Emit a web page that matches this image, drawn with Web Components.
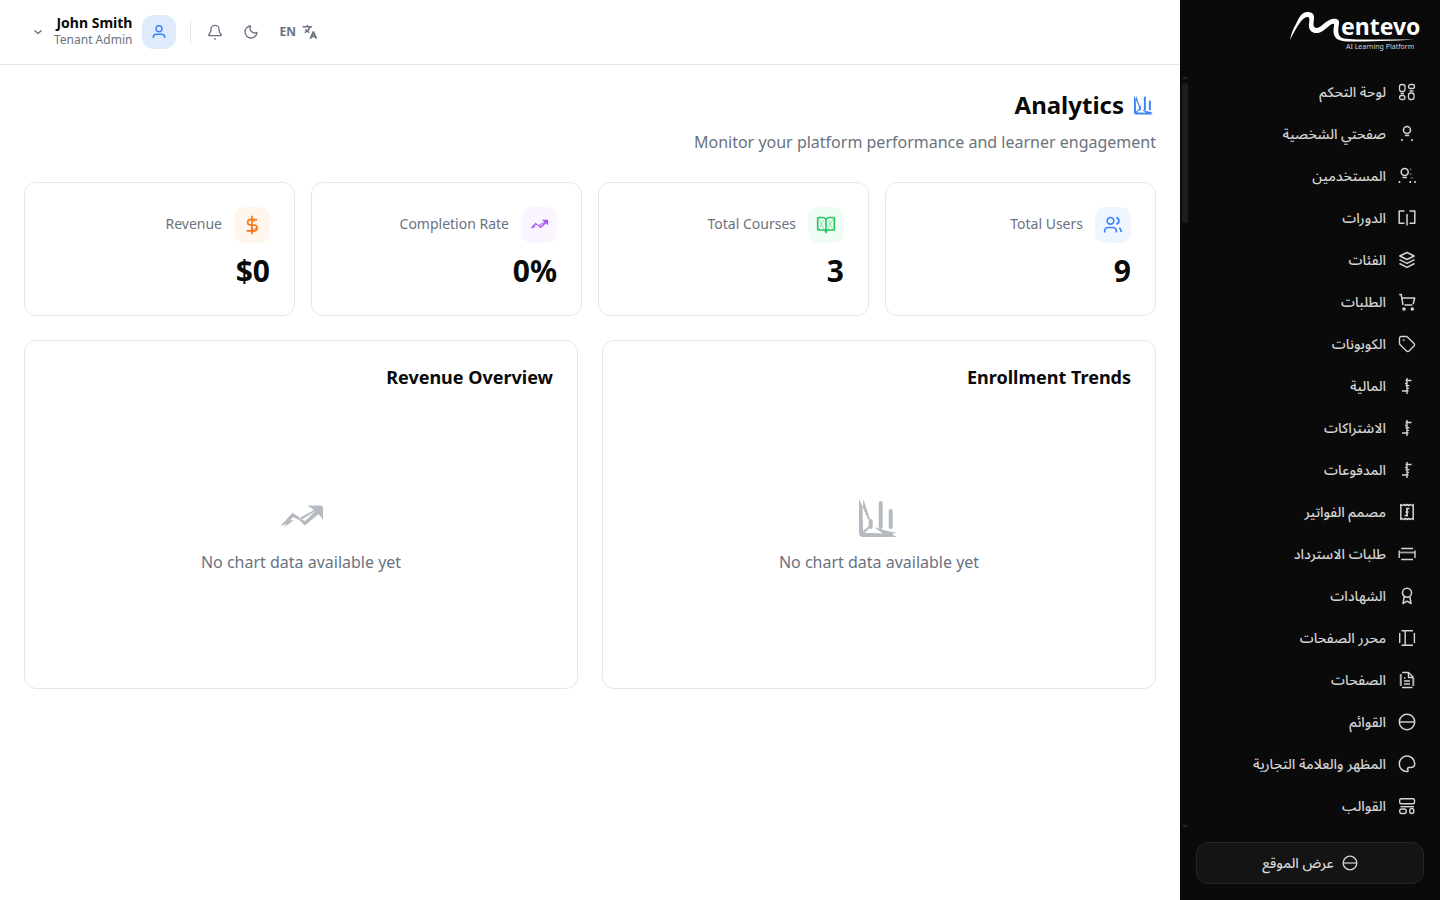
<!DOCTYPE html>
<html lang="ar" dir="rtl">
<head>
<meta charset="utf-8">
<meta name="viewport" content="width=device-width, initial-scale=1">
<title>Mentevo - Analytics</title>
<style>
  body {
    margin: 0;
    background: #fff;
    color: #0a0a0a;
    font-family: "Noto Sans", "Noto Sans Arabic", sans-serif;
    font-size: 16px;
  }
</style>
</head>
<body>
<app-shell>
  <app-sidebar slot="sidebar"></app-sidebar>
  <app-topbar slot="topbar"></app-topbar>
  <page-heading icon="chart">
    Analytics
    <span slot="subtitle">Monitor your platform performance and learner engagement</span>
  </page-heading>
  <card-grid cols="4">
    <stat-card icon="users" tone="blue" label="Total Users">9</stat-card>
    <stat-card icon="book" tone="green" label="Total Courses">3</stat-card>
    <stat-card icon="trend" tone="purple" label="Completion Rate">0%</stat-card>
    <stat-card icon="dollar" tone="orange" label="Revenue">$0</stat-card>
  </card-grid>
  <card-grid cols="2">
    <chart-card icon="chart" heading="Enrollment Trends">No chart data available yet</chart-card>
    <chart-card icon="trend" heading="Revenue Overview">No chart data available yet</chart-card>
  </card-grid>
</app-shell>

<script>
  // name: [viewBox size, stroke width, markup]
  const ICONS = {
    dashboard: [18, 1.3, `
      <rect x="1.5" y="1.5" width="5.5" height="7" rx="2.2"/>
      <rect x="10.5" y="1.5" width="6" height="4" rx="2"/>
      <path d="M11.500 8h4M2.500 10.500h3.500"/>
      <rect x="1.5" y="12.5" width="5.5" height="4" rx="2"/>
      <rect x="10.5" y="10" width="5.5" height="6.5" rx="2.2"/>`],
    profile: [18, 1.6, `
      <circle cx="9" cy="5" r="3.5"/>
      <path d="M6.800 10.500h4.400M4 14v2M14 14v2"/>`],
    people: [18, 1.6, `
      <circle cx="6.700" cy="5" r="3.500"/>
      <path d="M4.500 10.500H9M1.500 14v2M12.300 14v2M17 14v2"/>
      <path d="M12.500 1.500V3M12.500 6.500V8M14 10v1.500" opacity=".5"/>`],
    courses: [18, 1.5, `
      <path d="M6.500 2H1.200v12.200h5.300M11.500 2h5.300v12.200h-5.300"/>
      <path d="M9 5v11.500" stroke-width="2" opacity=".75"/>`],
    layers: [18, 1.5, `
      <path d="M9 1.500 1.800 5 9 8.500 16.200 5z"/>
      <path d="M1.500 8.700 9 12.400l7.500-3.700M1.500 12.500 9 16.300l7.500-3.800"/>`],
    cart: [18, 1.5, `
      <path d="M1.200 1.500h2L5 12M3.700 5h13l-1.500 6M6.500 12h8"/>
      <circle cx="6" cy="16" r="1" fill="currentColor"/>
      <circle cx="14.300" cy="16" r="1" fill="currentColor"/>`],
    tag: [24, 1.8, `
      <path d="M12.600 2.600A2 2 0 0 0 11.200 2H4a2 2 0 0 0-2 2v7.200a2 2 0 0 0 .6 1.400l8.700 8.700a2.400 2.400 0 0 0 3.400 0l6.600-6.600a2.400 2.400 0 0 0 0-3.400z"/>
      <circle cx="7.500" cy="7" r=".4"/>`],
    coin: [18, 1.3, `
      <path d="M9 1v16" stroke-width="2" opacity=".7"/>
      <path d="M7.500 3.500h6M4 14h6.500M7.500 8.700h4M7 6.500h2M9 11.300h2"/>`],
    receipt: [18, 1.5, `
      <path d="M2.800 1.500v15l1.500-1 1.500 1 1.600-1 1.600 1 1.600-1 1.600 1 1.500-1 1.500 1v-15l-1.500 1-1.500-1-1.600 1-1.600-1-1.600 1-1.600-1-1.500 1z"/>
      <path d="M9 5v8.500M8 5.500h3.500M6.500 12.500H10M7.500 9h3" stroke-width="1.700"/>`],
    card: [18, 1.4, `
      <path d="M3.200 3.500h11.800M3.200 14.500h11.800M1.200 5.500v7.500M17 5.500v7.500"/>
      <path d="M1.500 7.500h15.500" stroke-width="1.800" opacity=".75"/>`],
    award: [18, 1.5, `
      <circle cx="9" cy="5.700" r="4.500"/>
      <path d="M6.200 9.500 5 16.500l4-2.300 4 2.300-1.200-7"/>`],
    editor: [18, 1.4, `
      <path d="M3.500 1.800h11.500M3.500 16.200h11.500M1.700 4v10M16.400 4v10M7.200 2v14"/>`],
    file: [18, 1.4, `
      <path d="M4.200 1.500h6.300l5 5M4 16.500h10.500M10.500 1.500v5h5"/>
      <path d="M2.800 3v12M15.300 7v8" stroke-width="2" opacity=".8"/>
      <path d="M6 7h1.500M6 10h6M6 13h6"/>`],
    globe: [18, 1.5, `
      <circle cx="9" cy="9" r="7.700"/>
      <path d="M1.500 9h15" stroke-width="2" opacity=".7"/>`],
    palette: [18, 1.5, `
      <path d="M9.500 16.500C4.500 16.700 1.300 13.200 1.300 9a7.600 7.600 0 0 1 15.400-.5c0 2.500-1.700 4-4 4h-1.500c-1.500 0-2 1.200-1.400 2.200.4.700.5 1.500-.3 1.800z"/>`],
    template: [18, 1.4, `
      <rect x="1.700" y="1.700" width="14.800" height="5" rx="1.500"/>
      <path d="M2.500 9.700h13.500"/>
      <rect x="1.700" y="12" width="6.500" height="4.500" rx="2"/>
      <rect x="11.800" y="11.500" width="4" height="5" rx="2"/>`],
    users: [24, 2, `
      <path d="M16 21v-2a4 4 0 0 0-4-4H6a4 4 0 0 0-4 4v2M19.500 15.500c1.500.7 2.300 2.300 2.500 5M16 3.100a4 4 0 0 1 0 7.800"/>
      <circle cx="9" cy="7" r="4"/>`],
    book: [24, 2, `
      <path d="M12 7v15M3 18a1 1 0 0 1-1-1V4a1 1 0 0 1 1-1h5a4 4 0 0 1 4 4 4 4 0 0 1 4-4h5a1 1 0 0 1 1 1v13a1 1 0 0 1-1 1h-6a3 3 0 0 0-3 3 3 3 0 0 0-3-3z"/>
      <path d="m4 5 6 13M20 5l-6 13M4 17l5-11M20 17 15 6" stroke-width=".8" opacity=".7"/>`],
    dollar: [24, 2, `
      <path d="M12 1v22M18 5.500H9.500a3.300 3.300 0 0 0 0 6.500h5a3.500 3.500 0 0 1 0 7H5.500"/>
      <path d="m8 5 8 3M8 19l9-3" stroke-width="1"/>`],
    user: [24, 2.2, `
      <circle cx="12" cy="7" r="4.500"/>
      <path d="M3.500 21v-1.500a4.500 4.500 0 0 1 4.500-4h8a4.500 4.500 0 0 1 4.500 4V21"/>`],
    bell: [24, 2, `
      <path d="M10.500 22.300h3M3.300 15.300A1 1 0 0 0 4 17.500h16a1 1 0 0 0 .7-2.200C19.400 14 18 12.500 18 8A6 6 0 0 0 6 8c0 4.500-1.400 6-2.700 7.300z"/>`],
    moon: [24, 2, `
      <path d="M21 12.500A9 9 0 1 1 11.500 3 7 7 0 0 0 21 12.500z"/>`],
    chevron: [24, 3, `<path d="m5 9 7 6 7-6"/>`],
    language: [24, 2.2, `
      <path d="M1 4h14M8 1.500V4M5 8l6 5M12 4.500C11 8 8 11 4 13"/>
      <path d="m12.500 22 4.500-10 4.500 10M14.500 18.500h5" stroke-width="2.800"/>`],
    chart: [48, 0, `
      <g fill="currentColor">
        <path d="m4 5 3.500 7L8 37l7-5.500 1 1L9.500 39H14l14 .5-9-6.500L32 37l9.500 1.700L37 40l4.500 3H8c-2.500 0-4-1.500-4-4z"/>
        <path d="m8.300 5 6.700 20-1.500 1L8 14z"/>
        <rect x="13.700" y="25" width="4" height="10" rx="2"/>
        <rect x="23.700" y="7" width="4" height="28" rx="2"/>
        <rect x="33.700" y="15" width="4" height="20" rx="2"/>
      </g>`],
    trend: [48, 0, `
      <g fill="currentColor">
        <path d="m3.500 32 12-13.300 7.500 5-2 1.800-5-2.500-3 3.500 4-.5L6 34.500l4-4.500z"/>
        <path d="m23 23.700 14-7.700-6.500-4.500H44l2 1v13L41.500 20 28 31.500l-7-6.500 2-.5 5 2.500 11-10.500-14 9z"/>
      </g>`]
  };

  class AppIcon extends HTMLElement {
    connectedCallback() {
      const [box, stroke, body] = ICONS[this.getAttribute('name')];
      this.attachShadow({ mode: 'open' });
      this.shadowRoot.innerHTML = `
        <style>
          :host { display: block; flex: none; width: 18px; height: 18px; }
          svg { display: block; width: 100%; height: 100%; }
        </style>
        <svg viewBox="0 0 ${box} ${box}" fill="none" stroke="currentColor" stroke-width="${stroke}"
          stroke-linejoin="round" aria-hidden="true">${body}</svg>
      `;
    }
  }

  class BrandLogo extends HTMLElement {
    connectedCallback() {
      this.attachShadow({ mode: 'open' });
      this.shadowRoot.innerHTML = `
        <style>
          :host { display: block; }
          a { display: block; width: 132px; color: #fff; }
          svg { display: block; width: 132px; height: 44px; direction: ltr; }
          text { fill: #fff; font-family: "Noto Sans", sans-serif; }
          .tagline { fill: #d4d4d4; font-weight: 400; }
        </style>
        <a href="#" aria-label="Mentevo">
          <svg viewBox="0 0 132 44">
            <path fill="#fff" d="M2 32C3 26 5 21 8 16 11 9 14 4 19 4c5 0 7.500 2 7 6.500-.5 5-1.500 9 2.500 9.500 3 0 6-3.500 9.500-6 3-2 5-3.300 8-3.300 5 0 5.500 2.300 4.800 6.300-.8 5-1.800 12 5.200 13.500 8 1.500 40 1 70 1-20 1.500-45 2-66 2-12 0-15-5-14.500-12 0-2 1-4 .5-5.500-1-.5-2 0-3 .5-4.500 3-8 7.500-13 8.500-5 .5-8.500-2-9-6-.5-3.500 1.500-8-.5-9.800-2.500-1.200-5.500 1.300-8 4.800C8.500 19 5 26 2 32z"/>
            <text x="53" y="27" font-size="23" font-weight="700">entevo</text>
            <text class="tagline" x="58" y="41" font-size="7">AI Learning Platform</text>
          </svg>
        </a>
      `;
    }
  }

  const NAV = [
    ['dashboard', 'لوحة التحكم'],
    ['profile', 'صفحتي الشخصية'],
    ['people', 'المستخدمين'],
    ['courses', 'الدورات'],
    ['layers', 'الفئات'],
    ['cart', 'الطلبات'],
    ['tag', 'الكوبونات'],
    ['coin', 'المالية'],
    ['coin', 'الاشتراكات'],
    ['coin', 'المدفوعات'],
    ['receipt', 'مصمم الفواتير'],
    ['card', 'طلبات الاسترداد'],
    ['award', 'الشهادات'],
    ['editor', 'محرر الصفحات'],
    ['file', 'الصفحات'],
    ['globe', 'القوائم'],
    ['palette', 'المظهر والعلامة التجارية'],
    ['template', 'القوالب']
  ];

  class AppSidebar extends HTMLElement {
    connectedCallback() {
      this.attachShadow({ mode: 'open' });
      this.shadowRoot.innerHTML = `
        <style>
          :host {
            display: flex;
            flex-direction: column;
            box-sizing: border-box;
            height: 100vh;
            background: #0a0a0a;
            color: #d4d4d4;
            font-size: 14px;
            font-weight: 500;
          }
          brand-logo { padding: 8px 20px 19px; }
          .scroll { display: flex; flex: 1; min-height: 0; }
          nav {
            flex: 1;
            overflow: hidden;
            padding: 0 12px;
          }
          nav a {
            display: flex;
            align-items: center;
            gap: 12px;
            height: 42px;
            padding: 0 12px;
            box-sizing: border-box;
            color: inherit;
            text-decoration: none;
          }
          .bar {
            display: flex;
            flex-direction: column;
            align-items: center;
            width: 10px;
            padding: 5px 0 2px;
            box-sizing: border-box;
          }
          .arrow {
            border: 3px solid transparent;
            border-top-width: 0;
            border-bottom-color: #262628;
          }
          .arrow.down { transform: rotate(180deg); }
          .thumb {
            width: 6px;
            height: 140px;
            margin: 4px 0 auto;
            border-radius: 3px;
            background: #1d1d20;
          }
          footer { padding: 12px 16px 16px; }
          button {
            display: flex;
            align-items: center;
            justify-content: center;
            gap: 8px;
            width: 100%;
            height: 42px;
            border: 1px solid #262626;
            border-radius: 12px;
            background: #141414;
            color: inherit;
            font: inherit;
          }
          button app-icon { width: 16px; height: 16px; }
        </style>
        <brand-logo></brand-logo>
        <div class="scroll">
          <nav>
            ${NAV.map(([icon, text]) => `<a href="#"><app-icon name="${icon}"></app-icon><span>${text}</span></a>`).join('')}
          </nav>
          <div class="bar">
            <span class="arrow"></span>
            <span class="thumb"></span>
            <span class="arrow down"></span>
          </div>
        </div>
        <footer>
          <button type="button"><app-icon name="globe"></app-icon>عرض الموقع</button>
        </footer>
      `;
    }
  }

  class AppTopbar extends HTMLElement {
    connectedCallback() {
      this.attachShadow({ mode: 'open' });
      this.shadowRoot.innerHTML = `
        <style>
          :host {
            display: flex;
            align-items: center;
            justify-content: flex-end;
            height: 64px;
            padding: 0 24px;
            border-bottom: 1px solid #e5e7eb;
            color: #6b7280;
          }
          button {
            display: flex;
            align-items: center;
            justify-content: center;
            height: 36px;
            padding: 0 10px;
            border: 0;
            background: none;
            color: inherit;
            font: inherit;
          }
          button app-icon { width: 16px; height: 16px; }
          .lang { gap: 6px; font-size: 12px; font-weight: 700; }
          .lang span { padding-bottom: 2px; }
          .divider {
            width: 1px;
            height: 24px;
            margin-inline: 6px 14px;
            background: #e5e7eb;
          }
          .account {
            gap: 10px;
            padding: 0;
            padding-inline-end: 8px;
            text-align: start;
          }
          .account .chevron { width: 12px; height: 12px; }
          .avatar {
            display: grid;
            place-items: center;
            width: 34px;
            height: 34px;
            border-radius: 12px;
            background: #dfeafd;
            color: #3b82f6;
          }
          .who { display: grid; padding-bottom: 2px; }
          .who b { color: #0a0a0a; font-size: 14px; line-height: 18px; font-weight: 700; }
          .who small { font-size: 12px; line-height: 16px; }
        </style>
        <button class="lang" type="button"><app-icon name="language"></app-icon><span>EN</span></button>
        <button type="button" aria-label="Theme"><app-icon name="moon"></app-icon></button>
        <button type="button" aria-label="Notifications"><app-icon name="bell"></app-icon></button>
        <span class="divider"></span>
        <button class="account" type="button">
          <span class="avatar"><app-icon name="user"></app-icon></span>
          <span class="who"><b>John Smith</b><small>Tenant Admin</small></span>
          <app-icon class="chevron" name="chevron"></app-icon>
        </button>
      `;
    }
  }

  class AppShell extends HTMLElement {
    connectedCallback() {
      this.attachShadow({ mode: 'open' });
      this.shadowRoot.innerHTML = `
        <style>
          :host { display: grid; grid-template-columns: 260px 1fr; min-height: 100vh; }
          main {
            display: grid;
            gap: 24px;
            padding: 24px;
          }
        </style>
        <slot name="sidebar"></slot>
        <div>
          <slot name="topbar"></slot>
          <main><slot></slot></main>
        </div>
      `;
    }
  }

  class PageHeading extends HTMLElement {
    connectedCallback() {
      this.attachShadow({ mode: 'open' });
      this.shadowRoot.innerHTML = `
        <style>
          :host { display: block; padding-bottom: 3px; }
          h1 {
            display: flex;
            align-items: center;
            gap: 8px;
            margin: 0 0 8px;
            font-size: 24px;
            line-height: 32px;
            font-weight: 700;
          }
          app-icon { width: 24px; height: 24px; color: #3b82f6; }
          p { margin: 0; color: #6b7280; line-height: 26px; }
        </style>
        <h1><app-icon name="${this.getAttribute('icon')}"></app-icon><span><slot></slot></span></h1>
        <p><slot name="subtitle"></slot></p>
      `;
    }
  }

  class CardGrid extends HTMLElement {
    connectedCallback() {
      const cols = this.getAttribute('cols');
      this.attachShadow({ mode: 'open' });
      this.shadowRoot.innerHTML = `
        <style>
          :host {
            display: grid;
            grid-template-columns: repeat(${cols}, 1fr);
            gap: ${cols > 2 ? 16 : 24}px;
          }
        </style>
        <slot></slot>
      `;
    }
  }

  const TONES = {
    blue: ['#3b82f6', '#eff6ff'],
    green: ['#22c55e', '#f0fdf4'],
    purple: ['#a855f7', '#faf5ff'],
    orange: ['#f97316', '#fff7ed']
  };

  class StatCard extends HTMLElement {
    connectedCallback() {
      const [color, background] = TONES[this.getAttribute('tone')];
      this.attachShadow({ mode: 'open' });
      this.shadowRoot.innerHTML = `
        <style>
          :host {
            display: block;
            padding: 24px;
            border: 1px solid #e5e7eb;
            border-radius: 12px;
            background: #fff;
          }
          .top {
            display: flex;
            align-items: center;
            gap: 12px;
            margin-bottom: 8px;
            color: #6b7280;
            font-size: 14px;
          }
          .tile {
            display: grid;
            place-items: center;
            width: 36px;
            height: 36px;
            border-radius: 10px;
            color: ${color};
            background: ${background};
          }
          .label { padding-bottom: 3px; }
          app-icon { width: 20px; height: 20px; }
          .value { font-size: 30px; line-height: 40px; font-weight: 700; }
        </style>
        <div class="top">
          <span class="tile"><app-icon name="${this.getAttribute('icon')}"></app-icon></span>
          <span class="label">${this.getAttribute('label')}</span>
        </div>
        <div class="value"><bdi dir="ltr"><slot></slot></bdi></div>
      `;
    }
  }

  class ChartCard extends HTMLElement {
    connectedCallback() {
      this.attachShadow({ mode: 'open' });
      this.shadowRoot.innerHTML = `
        <style>
          :host {
            display: block;
            padding: 24px;
            border: 1px solid #e5e7eb;
            border-radius: 12px;
            background: #fff;
          }
          h2 { margin: 0 0 14px; font-size: 18px; line-height: 25px; font-weight: 700; }
          .empty {
            display: flex;
            flex-direction: column;
            align-items: center;
            justify-content: center;
            gap: 8px;
            height: 260px;
            color: #6b7280;
            line-height: 24px;
          }
          app-icon { width: 48px; height: 48px; color: #b5b9c0; }
        </style>
        <h2>${this.getAttribute('heading')}</h2>
        <div class="empty">
          <app-icon name="${this.getAttribute('icon')}"></app-icon>
          <span><slot></slot></span>
        </div>
      `;
    }
  }

  customElements.define('app-icon', AppIcon);
  customElements.define('brand-logo', BrandLogo);
  customElements.define('app-sidebar', AppSidebar);
  customElements.define('app-topbar', AppTopbar);
  customElements.define('app-shell', AppShell);
  customElements.define('page-heading', PageHeading);
  customElements.define('card-grid', CardGrid);
  customElements.define('stat-card', StatCard);
  customElements.define('chart-card', ChartCard);
</script>
</body>
</html>
